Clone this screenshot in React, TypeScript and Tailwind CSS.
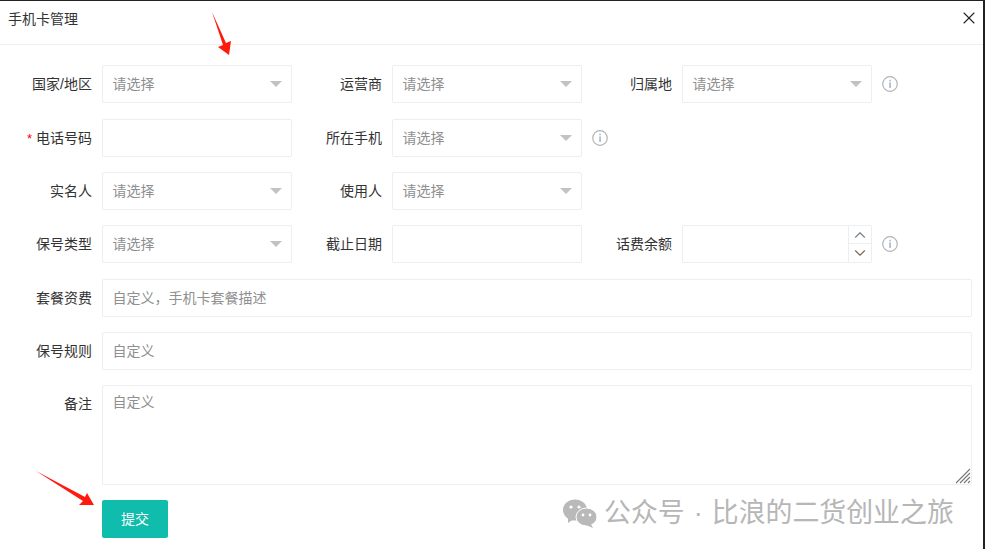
import { ChevronDown, ChevronUp, X } from "lucide-react";

const font = "font-['Liberation_Sans','Noto_Sans_CJK_SC',sans-serif]";
const boxBorder = "border border-[#eceef0] rounded-[2px]";

function Label({ text, width, required }: { text: string; width: string; required?: boolean }) {
  return (
    <label className={`${width} shrink-0 pr-[10px] text-right text-[14px] leading-[38px] text-[#333]`}>
      {required && <span className="mr-[4px] text-[13px] text-[#f00]">*</span>}
      {text}
    </label>
  );
}

function Select() {
  return (
    <div className={`${boxBorder} flex h-[38px] w-[190px] shrink-0 items-center justify-between pl-[9.5px] pr-[9px] text-[14px] text-[#8f8f8f]`}>
      <span>请选择</span>
      <span className="h-0 w-0 border-x-[6px] border-t-[6px] border-x-transparent border-t-[#c2c2c2]" />
    </div>
  );
}

function TextBox({ placeholder, className }: { placeholder?: string; className: string }) {
  return (
    <input
      placeholder={placeholder}
      className={`${boxBorder} h-[38px] pl-[9.5px] pr-[10px] text-[14px] outline-none placeholder:text-[#8f8f8f] ${className}`}
    />
  );
}

function Info() {
  return (
    <svg viewBox="0 0 16 16" className="ml-[10px] h-[16px] w-[16px] shrink-0">
      <circle cx="8" cy="8" r="7.3" fill="none" stroke="#b4b4b4" strokeWidth="1.2" />
      <rect x="7.4" y="3.8" width="1.3" height="1.5" fill="#8aa8c4" />
      <rect x="7.4" y="6.4" width="1.3" height="5.6" fill="#8aa8c4" />
    </svg>
  );
}

function Field({ label, first, required, children }: { label: string; first?: boolean; required?: boolean; children: React.ReactNode }) {
  return (
    <>
      <Label text={label} width={first ? "w-[102px]" : "w-[100px]"} required={required} />
      {children}
    </>
  );
}

function Row({ gap, children }: { gap: string; children: React.ReactNode }) {
  return <div className={`flex h-[38px] items-center ${gap}`}>{children}</div>;
}

export default function App() {
  return (
    <div className={`${font} relative h-[549px] w-[985px] overflow-hidden border-r-2 border-t border-r-[#222] border-t-[#222] bg-white`}>
      {/* header */}
      <div className="flex h-[44px] items-start justify-between border-b border-[#eeeeee] pl-[8px] pr-[4px] pt-[8px]">
        <span className="text-[14px] leading-[20px] text-[#333]">手机卡管理</span>
        <X size={20} strokeWidth={1.3} className="-mt-px text-[#222]" />
      </div>

      {/* form */}
      <div className="flex flex-col">
        <Row gap="mt-[20px]">
          <Field label="国家/地区" first><Select /></Field>
          <Field label="运营商"><Select /></Field>
          <Field label="归属地"><Select /></Field>
          <Info />
        </Row>
        <Row gap="mt-[16px]">
          <Field label="电话号码" first required><TextBox className="w-[190px]" /></Field>
          <Field label="所在手机"><Select /></Field>
          <Info />
        </Row>
        <Row gap="mt-[15px]">
          <Field label="实名人" first><Select /></Field>
          <Field label="使用人"><Select /></Field>
        </Row>
        <Row gap="mt-[15px]">
          <Field label="保号类型" first><Select /></Field>
          <Field label="截止日期"><TextBox className="w-[190px]" /></Field>
          <Field label="话费余额">
            <div className={`${boxBorder} flex h-[38px] w-[190px] shrink-0 justify-end`}>
              <div className="flex w-[23px] flex-col border-l border-[#eceef0]">
                <div className="flex h-[18px] items-center justify-center border-b border-[#eceef0]">
                  <ChevronUp size={18} strokeWidth={1.5} className="shrink-0 text-[#7a8088]" />
                </div>
                <div className="flex h-[18px] items-center justify-center">
                  <ChevronDown size={18} strokeWidth={1.5} className="shrink-0 text-[#7a6a5a]" />
                </div>
              </div>
            </div>
          </Field>
          <Info />
        </Row>
        <Row gap="mt-[16px]">
          <Field label="套餐资费" first><TextBox placeholder="自定义，手机卡套餐描述" className="w-[870px]" /></Field>
        </Row>
        <Row gap="mt-[15px]">
          <Field label="保号规则" first><TextBox placeholder="自定义" className="w-[870px]" /></Field>
        </Row>
        <div className="mt-[15px] flex h-[100px] items-start">
          <Field label="备注" first>
            <div className="relative">
              <textarea
                placeholder="自定义"
                className={`${boxBorder} block h-[100px] w-[870px] resize-none pl-[9.5px] pr-[10px] py-[6px] text-[14px] leading-[20px] outline-none placeholder:text-[#8f8f8f]`}
              />
              {/* resize grip */}
              <svg viewBox="0 0 16 16" className="pointer-events-none absolute bottom-[1px] right-[1px] h-[16px] w-[16px]">
                <path d="M1 15 L15 1 M5 15 L15 5 M9 15 L15 9 M13 15 L15 13" stroke="#777" strokeWidth="1.1" fill="none" />
              </svg>
            </div>
          </Field>
        </div>
      </div>

      <button className="ml-[102px] mt-[15px] h-[38px] w-[66px] rounded-[2px] bg-[#10bdac] text-[14px] text-white">
        提交
      </button>

      {/* red arrows over the page */}
      <svg viewBox="0 0 985 549" className="pointer-events-none absolute left-0 top-[-1px] h-[549px] w-[985px]">
        <path d="M212 12 L226 43 L231 41 L229 55 L218 47 L223 45 Z" fill="#ff1a0d" />
        <path d="M36 471 L85 497 L87 493 L94 505 L79 505 L83 501 Z" fill="#ff1a0d" />
      </svg>

      {/* watermark */}
      <div className="pointer-events-none absolute left-[562px] top-[495px] flex items-center">
        <svg viewBox="0 0 36 30" className="h-[30px] w-[36px]">
          <ellipse cx="13" cy="12" rx="12" ry="10.5" fill="#b9b9b9" />
          <path d="M6 19 L6 25 L12 21 Z" fill="#b9b9b9" />
          <ellipse cx="24.5" cy="19" rx="10.5" ry="9" fill="#b9b9b9" stroke="#fff" strokeWidth="1" />
          <path d="M29 26 L31 30 L24 27 Z" fill="#b9b9b9" />
          <circle cx="9" cy="9" r="1.6" fill="#fff" />
          <circle cx="17" cy="9" r="1.6" fill="#fff" />
          <circle cx="21" cy="17" r="1.4" fill="#fff" />
          <circle cx="28" cy="17" r="1.4" fill="#fff" />
        </svg>
        <span className="ml-[6px] whitespace-nowrap text-[26.9px] leading-[34px] text-[#b6b6b6] [word-spacing:1.6px]">公众号 · 比浪的二货创业之旅</span>
      </div>
    </div>
  );
}
